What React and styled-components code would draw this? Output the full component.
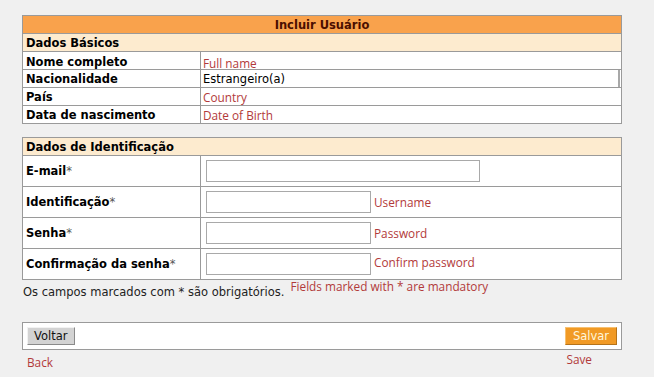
import styled, { createGlobalStyle } from "styled-components";

const GlobalStyle = createGlobalStyle`
  html, body {
    margin: 0;
    padding: 0;
    background: #f0f0f0;
  }
  body {
    font-family: "DejaVu Sans", Verdana, sans-serif;
    font-size: 11.5px;
    color: #000;
  }
`;

const colors = {
  border: "#9a9a9a",
  orange: "#f9a24c",
  peach: "#fdebcf",
  hint: "#b23a3a",
};

const Page = styled.div`
  width: 600px;
  padding: 15px 0 0 22px;
  display: flex;
  flex-direction: column;
`;

const Panel = styled.div`
  border: 1px solid ${colors.border};
  background: #fff;
  display: flex;
  flex-direction: column;
  margin-bottom: ${(p) => p.$gap || 0}px;
`;

const TitleBar = styled.div`
  height: 17px;
  background: ${colors.orange};
  border-bottom: 1px solid ${colors.border};
  color: #4a0e00;
  font-weight: 700;
  display: flex;
  align-items: center;
  justify-content: center;
`;

const SectionBar = styled.div`
  height: 17px;
  background: ${colors.peach};
  border-bottom: 1px solid ${colors.border};
  font-weight: 700;
  display: flex;
  align-items: center;
  padding-left: 3px;
`;

const Row = styled.div`
  display: grid;
  grid-template-columns: 178px 1fr;
  height: ${(p) => p.$h}px;
  border-bottom: 1px solid ${colors.border};

  &:last-child {
    border-bottom: none;
  }
`;

const Label = styled.div`
  border-right: 1px solid ${colors.border};
  font-weight: 700;
  display: flex;
  align-items: center;
  padding-left: 3px;

  span {
    font-weight: 400;
    color: #555;
  }
`;

const Value = styled.div`
  display: flex;
  align-items: center;
  padding-left: ${(p) => p.$pad ?? 2}px;
  gap: 3px;
  color: ${(p) => (p.$hint ? colors.hint : "#000")};
  font-family: ${(p) => (p.$hint ? '"Open Sans", sans-serif' : "inherit")};
  font-size: ${(p) => (p.$hint ? "11.8px" : "inherit")};
  padding-top: ${(p) => p.$dy || 0}px;
`;

const SelectBox = styled.div`
  flex: 1;
  align-self: stretch;
  display: flex;
  align-items: center;
  padding-left: 2px;
  margin-right: 1px;
  border-right: 2px solid #a8a8a8;
`;

const Input = styled.input`
  box-sizing: border-box;
  width: ${(p) => p.$w}px;
  height: 22px;
  margin: 0;
  border: 1px solid #a9a9a9;
  background: #fff;
  font: inherit;
`;

const Hint = styled.span`
  color: ${colors.hint};
  font-family: "Open Sans", sans-serif;
  font-size: 11.8px;
  margin-top: ${(p) => p.$dy || 0}px;
`;

const Note = styled.div`
  display: flex;
  align-items: flex-end;
  gap: 6px;
  height: 19px;
  padding-left: 1px;
  margin-bottom: 23px;
  color: #222;
`;

const NoteHint = styled(Hint)`
  position: relative;
  top: -5px;
`;

const ButtonBar = styled.div`
  border: 1px solid ${colors.border};
  background: #fff;
  height: 28px;
  box-sizing: border-box;
  padding: 0 4px;
  display: flex;
  align-items: center;
  justify-content: space-between;
`;

const Button = styled.button`
  height: 18px;
  padding: 0 ${(p) => (p.$primary ? 7 : 6)}px;
  margin: 0;
  font-family: "DejaVu Sans", Verdana, sans-serif;
  font-size: 11.5px;
  line-height: 14px;
  background: ${(p) => (p.$primary ? "#f19a25" : "#d3d3d3")};
  color: ${(p) => (p.$primary ? "#fff6dc" : "#111")};
  border: 1px solid;
  border-color: ${(p) =>
    p.$primary
      ? "#f7c070 #b5731a #b5731a #f7c070"
      : "#f2f2f2 #8a8a8a #8a8a8a #f2f2f2"};
`;

const Captions = styled.div`
  display: flex;
  justify-content: space-between;
  padding: 4px 30px 0 5px;
`;

const Caption = styled.span`
  color: ${colors.hint};
  font-family: "Open Sans", sans-serif;
  font-size: 11.8px;
  margin-top: ${(p) => p.$dy || 0}px;
`;

const basic = [
  { label: "Nome completo", hint: "Full name", dy: 3 },
  { label: "Nacionalidade", value: "Estrangeiro(a)" },
  { label: "País", hint: "Country", dy: -2 },
  { label: "Data de nascimento", hint: "Date of Birth", dy: 0 },
];

const ident = [
  { label: "E-mail", w: 274 },
  { label: "Identificação", w: 165, hint: "Username" },
  { label: "Senha", w: 165, hint: "Password" },
  { label: "Confirmação da senha", w: 165, hint: "Confirm password", dy: -5 },
];

export default function App() {
  return (
    <>
      <GlobalStyle />
      <Page>
        <Panel $gap={13}>
          <TitleBar>Incluir Usuário</TitleBar>
          <SectionBar>Dados Básicos</SectionBar>
          {basic.map((r) => (
            <Row key={r.label} $h={17}>
              <Label>{r.label}</Label>
              {r.value ? (
                <Value $pad={0}>
                  <SelectBox>{r.value}</SelectBox>
                </Value>
              ) : (
                <Value $hint $dy={r.dy}>
                  {r.hint}
                </Value>
              )}
            </Row>
          ))}
        </Panel>

        <Panel>
          <SectionBar>Dados de Identificação</SectionBar>
          {ident.map((r) => (
            <Row key={r.label} $h={30}>
              <Label>
                {r.label}
                <span>*</span>
              </Label>
              <Value $pad={5}>
                <Input type="text" $w={r.w} />
                {r.hint && <Hint $dy={r.dy}>{r.hint}</Hint>}
              </Value>
            </Row>
          ))}
        </Panel>

        <Note>
          Os campos marcados com * são obrigatórios.
          <NoteHint>Fields marked with * are mandatory</NoteHint>
        </Note>

        <ButtonBar>
          <Button>Voltar</Button>
          <Button $primary>Salvar</Button>
        </ButtonBar>

        <Captions>
          <Caption>Back</Caption>
          <Caption $dy={-3}>Save</Caption>
        </Captions>
      </Page>
    </>
  );
}
